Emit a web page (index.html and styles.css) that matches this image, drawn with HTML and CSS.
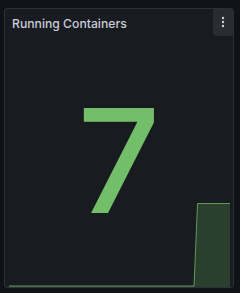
FILE: index.html
```html
<!DOCTYPE html>
<html>
<head>
<meta charset="utf-8">
<link rel="stylesheet" href="styles.css">
</head>
<body>
<div class="panel">
  <div class="header">
    <h2 class="title">Running Containers</h2>
    <button class="menu" aria-label="Menu">
      <svg width="4" height="12" viewBox="0 0 4 12"><circle cx="2" cy="2" r="1.2" fill="#ccccdc"/><circle cx="2" cy="6" r="1.2" fill="#ccccdc"/><circle cx="2" cy="10" r="1.2" fill="#ccccdc"/></svg>
    </button>
  </div>
  <div class="body">
    <svg class="spark" viewBox="0 0 221 84" preserveAspectRatio="none">
      <path d="M0 83 L185 83 L188.5 0.5 L221 0.5 L221 84 L0 84 Z" fill="rgba(115,191,105,0.22)"/>
      <path d="M0 83 L185 83 L188.5 0.5 L221 0.5" fill="none" stroke="#73bf69" stroke-width="1" stroke-opacity="0.75"/>
    </svg>
    <div class="value">7</div>
  </div>
</div>
</body>
</html>
```
FILE: styles.css
```css
html, body {
  margin: 0;
  background: #111217;
  width: 240px;
  height: 293px;
  overflow: hidden;
}
body {
  padding: 8px 0 0 4px;
  box-sizing: border-box;
  font-family: Inter, "Noto Sans", sans-serif;
}
.panel {
  position: relative;
  width: 230px;
  height: 280px;
  box-sizing: border-box;
  background: #181b1f;
  border: 1px solid rgba(204, 204, 220, 0.12);
  border-radius: 4px;
  display: flex;
  flex-direction: column;
  overflow: hidden;
}
.header {
  height: 28px;
  display: flex;
  align-items: center;
  padding-left: 7px;
  flex: none;
}
.title {
  margin: 0;
  font-size: 12.2px;
  font-weight: 500;
  color: #ccccdc;
}
.menu {
  position: absolute;
  top: -1px;
  right: 0;
  width: 20px;
  height: 28px;
  border: none;
  border-radius: 4px;
  background: #2a2c31;
  display: flex;
  align-items: center;
  justify-content: center;
  padding: 0;
}
.body {
  position: relative;
  flex: 1;
  display: flex;
  align-items: center;
  justify-content: center;
}
.spark {
  position: absolute;
  left: 4px;
  bottom: 0;
  width: 221px;
  height: 84px;
}
.value {
  position: relative;
  top: -2px;
  font-size: 145px;
  font-weight: 500;
  color: #73bf69;
  line-height: 1;
}
```
